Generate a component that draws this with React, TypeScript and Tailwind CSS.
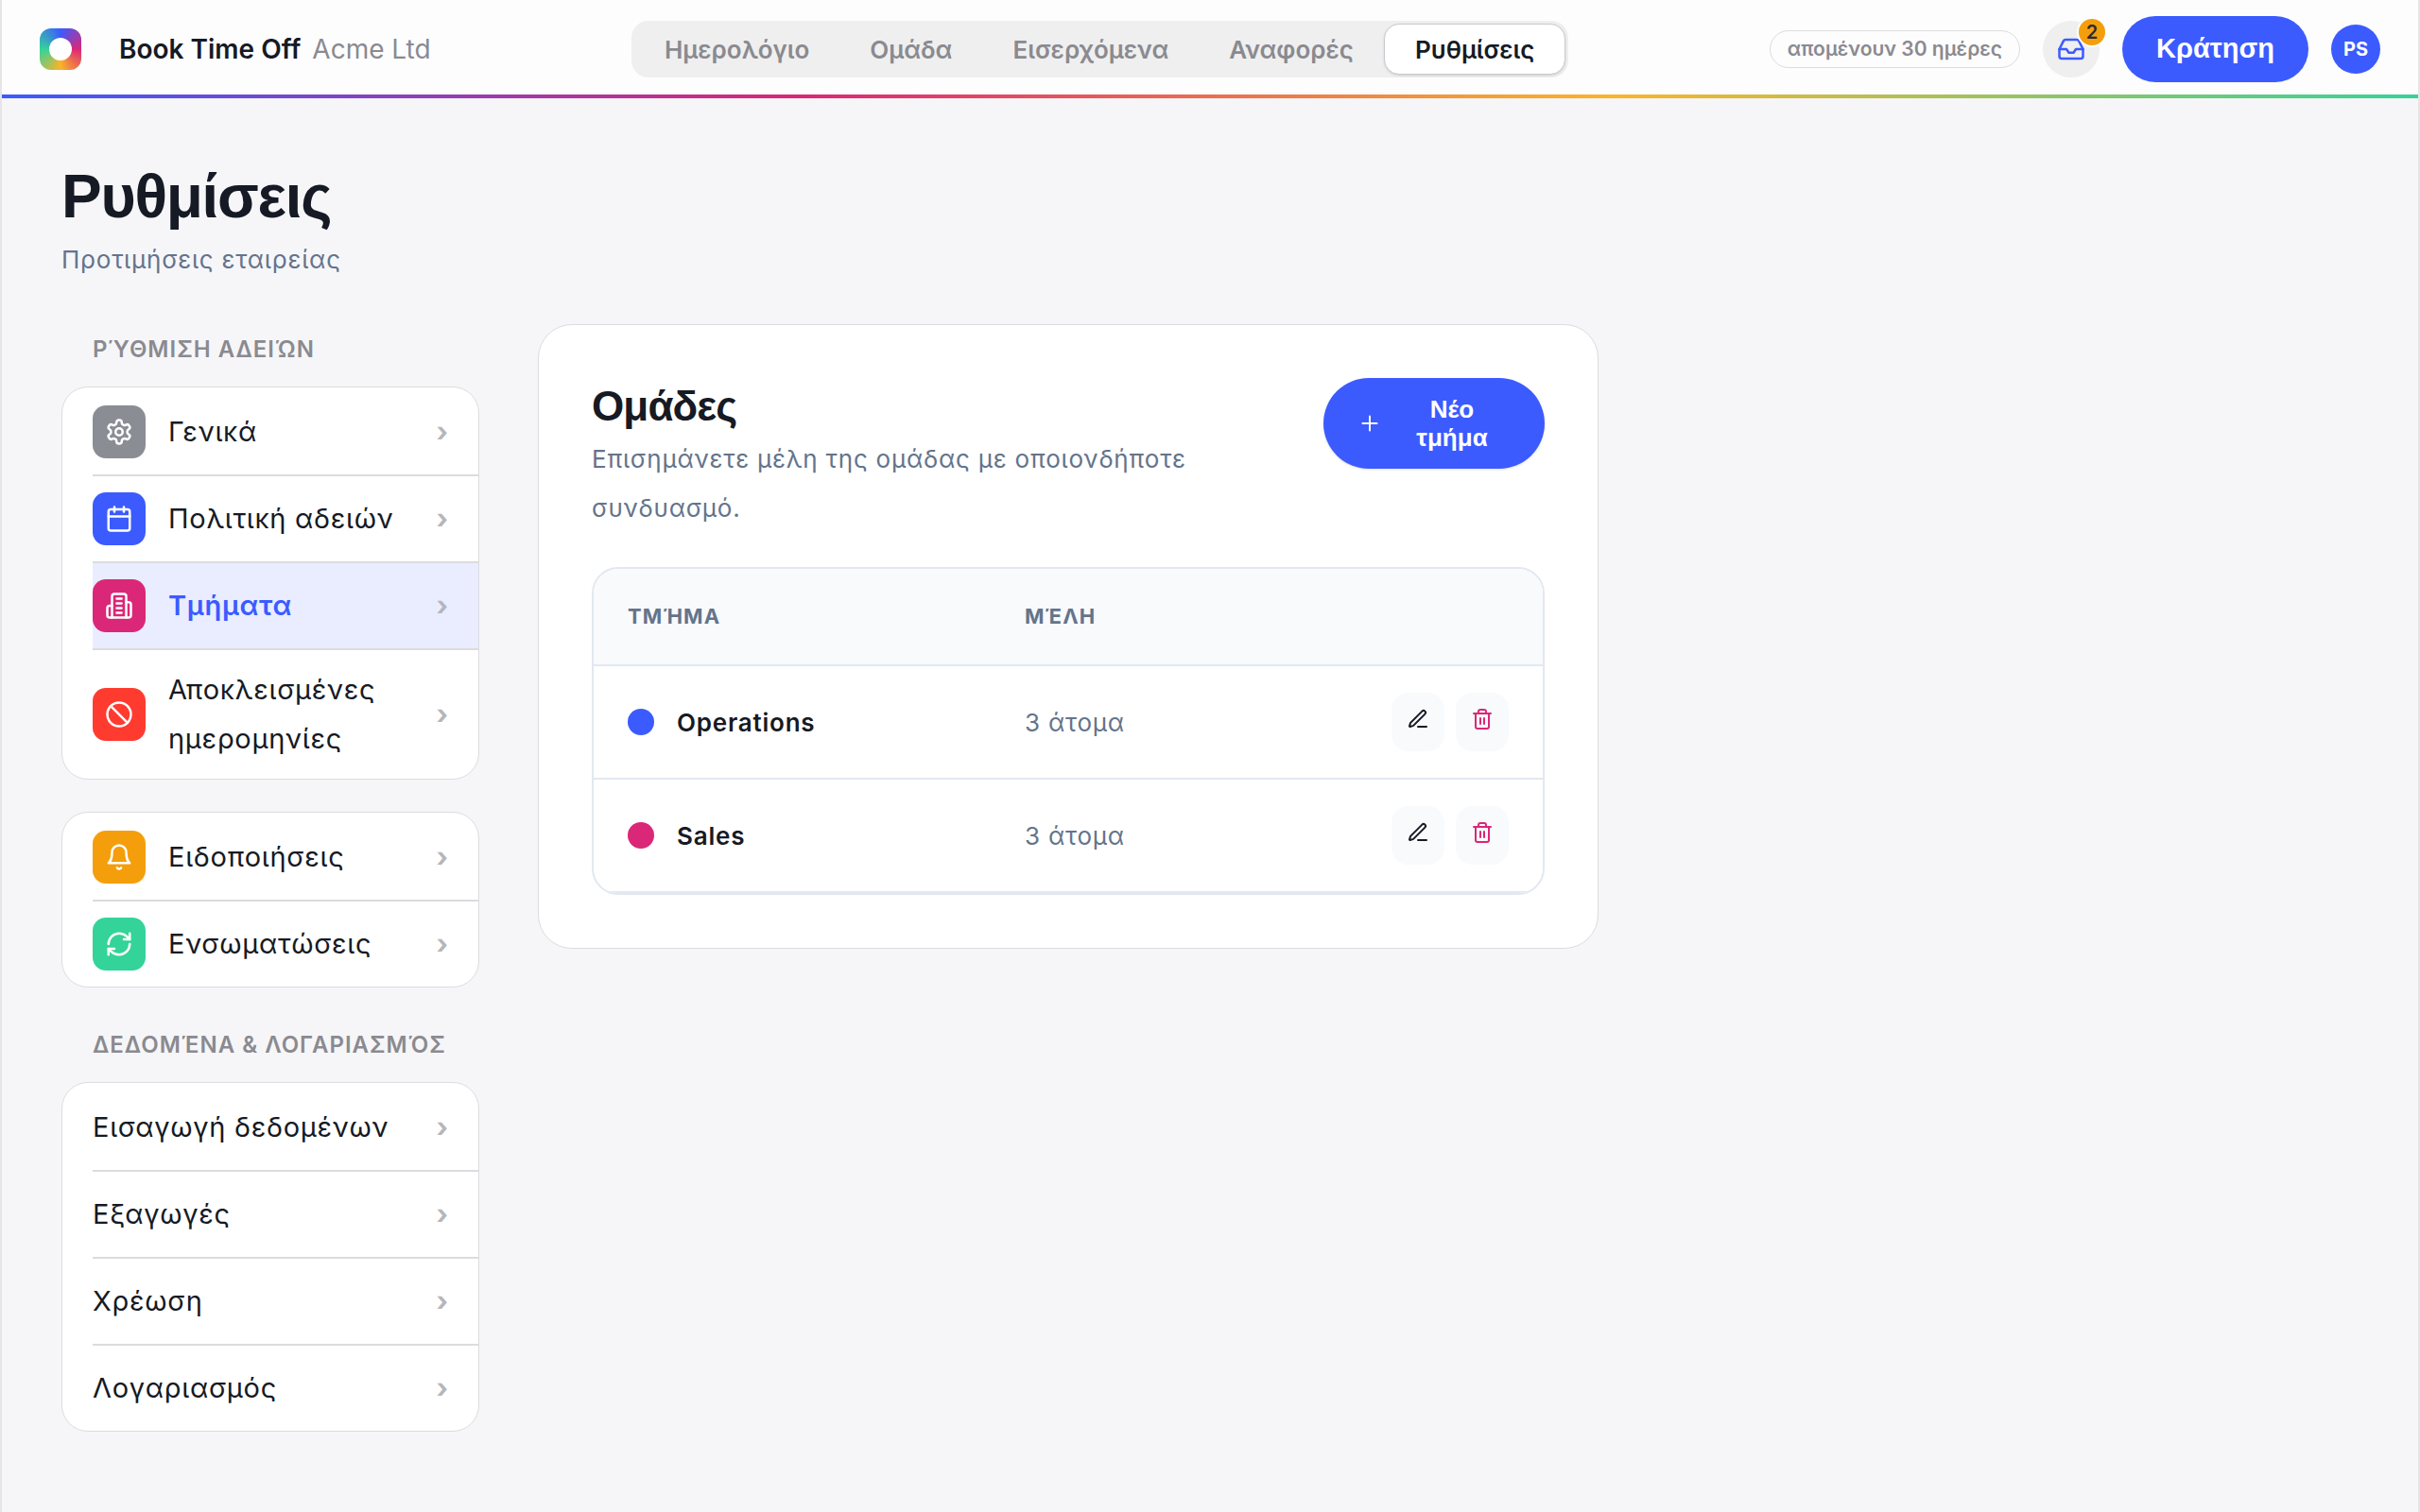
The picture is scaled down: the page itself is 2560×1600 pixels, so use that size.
import type { ReactNode } from 'react'
import { Ban, Inbox, Plus, RefreshCw } from 'lucide-react'

const navItems = ['Ημερολόγιο', 'Ομάδα', 'Εισερχόμενα', 'Αναφορές', 'Ρυθμίσεις']

const teams = [
  { name: 'Operations', members: '3 άτομα', dot: 'bg-[#3b5bff]' },
  { name: 'Sales', members: '3 άτομα', dot: 'bg-[#db2777]' },
]

function Icon({ children, size = 30 }: { children: ReactNode; size?: number }) {
  return (
    <svg
      width={size}
      height={size}
      viewBox="0 0 24 24"
      fill="none"
      stroke="currentColor"
      strokeWidth="2"
      strokeLinecap="round"
      strokeLinejoin="round"
      aria-hidden="true"
    >
      {children}
    </svg>
  )
}

function GearIcon() {
  return (
    <Icon>
      <path d="M12.22 2h-.44a2 2 0 0 0-2 2v.18a2 2 0 0 1-1 1.73l-.43.25a2 2 0 0 1-2 0l-.15-.08a2 2 0 0 0-2.73.73l-.22.38a2 2 0 0 0 .73 2.73l.15.1a2 2 0 0 1 1 1.72v.51a2 2 0 0 1-1 1.74l-.15.09a2 2 0 0 0-.73 2.73l.22.38a2 2 0 0 0 2.73.73l.15-.08a2 2 0 0 1 2 0l.43.25a2 2 0 0 1 1 1.73V20a2 2 0 0 0 2 2h.44a2 2 0 0 0 2-2v-.18a2 2 0 0 1 1-1.73l.43-.25a2 2 0 0 1 2 0l.15.08a2 2 0 0 0 2.73-.73l.22-.39a2 2 0 0 0-.73-2.73l-.15-.08a2 2 0 0 1-1-1.74v-.5a2 2 0 0 1 1-1.74l.15-.09a2 2 0 0 0 .73-2.73l-.22-.38a2 2 0 0 0-2.73-.73l-.15.08a2 2 0 0 1-2 0l-.43-.25a2 2 0 0 1-1-1.73V4a2 2 0 0 0-2-2z" />
      <circle cx="12" cy="12" r="3" />
    </Icon>
  )
}

function CalendarIcon() {
  return (
    <Icon>
      <path d="M8 2v4" />
      <path d="M16 2v4" />
      <rect width="18" height="18" x="3" y="4" rx="2" />
      <path d="M3 10h18" />
    </Icon>
  )
}

function BuildingIcon() {
  return (
    <Icon>
      <path d="M6 22V4a2 2 0 0 1 2-2h8a2 2 0 0 1 2 2v18Z" />
      <path d="M6 12H4a2 2 0 0 0-2 2v6a2 2 0 0 0 2 2h2" />
      <path d="M18 9h2a2 2 0 0 1 2 2v9a2 2 0 0 1-2 2h-2" />
      <path d="M10 6h4" />
      <path d="M10 10h4" />
      <path d="M10 14h4" />
      <path d="M10 18h4" />
    </Icon>
  )
}

function BellIcon() {
  return (
    <Icon>
      <path d="M6 8a6 6 0 0 1 12 0c0 7 3 9 3 9H3s3-2 3-9" />
      <path d="M10.3 21a1.94 1.94 0 0 0 3.4 0" />
    </Icon>
  )
}

function PenIcon() {
  return (
    <Icon size={24}>
      <path d="M12 20h9" />
      <path d="M16.376 3.622a1 1 0 0 1 3.002 3.002L7.368 18.635a2 2 0 0 1-.855.506l-2.872.838a.5.5 0 0 1-.62-.62l.838-2.872a2 2 0 0 1 .506-.854z" />
    </Icon>
  )
}

function TrashIcon() {
  return (
    <Icon size={24}>
      <path d="M3 6h18" />
      <path d="M19 6v14a2 2 0 0 1-2 2H7a2 2 0 0 1-2-2V6" />
      <path d="M8 6V4a2 2 0 0 1 2-2h4a2 2 0 0 1 2 2v2" />
      <path d="M10 11v6" />
      <path d="M14 11v6" />
    </Icon>
  )
}

function Header() {
  return (
    <header>
      <div className="flex h-[100px] items-center justify-between bg-[#fdfdfe] px-10 pt-1">
        <a href="#" className="flex items-center">
          <span className="flex h-11 w-11 items-center justify-center rounded-xl bg-[conic-gradient(#3b5bff,#db2777,#fbb429,#34d399,#3b5bff)]">
            <span className="h-6 w-6 rounded-full bg-white" />
          </span>
          <span className="ml-10 text-[28px] font-semibold text-[#161a24]">Book Time Off</span>
          <span className="ml-3 text-[28px] text-[#8a8a90]">Acme Ltd</span>
        </a>

        <nav className="flex h-[60px] items-center rounded-[18px] bg-[#efefef] px-[3px]">
          {navItems.map((item) => (
            <a
              key={item}
              href="#"
              className={
                item === 'Ρυθμίσεις'
                  ? 'flex h-[54px] items-center rounded-2xl border border-[#c9cad0] bg-white px-8 text-[26px] font-semibold text-[#161a24] shadow-sm'
                  : 'flex h-[54px] items-center px-8 text-[26px] font-semibold text-[#8a8a90]'
              }
            >
              {item}
            </a>
          ))}
        </nav>

        <div className="flex items-center gap-6">
          <span className="flex h-10 items-center rounded-full border border-[#dcdcdf] px-[18px] text-[21px] font-semibold text-[#8a8a90]">
            απομένουν 30 ημέρες
          </span>
          <button
            type="button"
            aria-label="Εισερχόμενα"
            className="relative flex h-[60px] w-[60px] items-center justify-center rounded-full bg-[#efefef] text-[#3b5bff]"
          >
            <Inbox size={30} />
            <span className="absolute -right-2 -top-1 flex h-8 w-8 items-center justify-center rounded-full border-2 border-[#fdfdfe] bg-[#f59e0b] text-[20px] font-semibold text-[#2b2b33]">
              2
            </span>
          </button>
          <button
            type="button"
            className="h-[70px] rounded-full bg-[#3b5bff] px-9 font-['Liberation_Sans',sans-serif] text-[29px] font-bold text-white"
          >
            Κράτηση
          </button>
          <button type="button" className="h-[52px] w-[52px] rounded-full bg-[#3b5bff] text-[20px] font-bold text-white">
            PS
          </button>
        </div>
      </div>
      <div className="h-1 bg-[linear-gradient(90deg,#3b5bff,#db2777,#fbb429,#34d399)]" />
    </header>
  )
}

type Entry = { label: string; icon?: ReactNode; tint?: string; active?: boolean }

const leaveEntries: Entry[] = [
  { label: 'Γενικά', icon: <GearIcon />, tint: 'bg-[#8a8d94]' },
  { label: 'Πολιτική αδειών', icon: <CalendarIcon />, tint: 'bg-[#3b5bff]' },
  { label: 'Τμήματα', icon: <BuildingIcon />, tint: 'bg-[#db2777]', active: true },
  { label: 'Αποκλεισμένες ημερομηνίες', icon: <Ban size={30} />, tint: 'bg-[#ff3b30]' },
]

const appEntries: Entry[] = [
  { label: 'Ειδοποιήσεις', icon: <BellIcon />, tint: 'bg-[#f59e0b]' },
  { label: 'Ενσωματώσεις', icon: <RefreshCw size={30} />, tint: 'bg-[#34d399]' },
]

const dataEntries: Entry[] = [
  { label: 'Εισαγωγή δεδομένων' },
  { label: 'Εξαγωγές' },
  { label: 'Χρέωση' },
  { label: 'Λογαριασμός' },
]

function MenuCard({ entries }: { entries: Entry[] }) {
  return (
    <ul className="overflow-hidden rounded-[28px] border border-[#dcdcdf] bg-white pl-8">
      {entries.map(({ label, icon, tint, active }) => (
        <li key={label} className="border-t-2 border-[#dcdcdf] first:border-transparent">
          <a
            href="#"
            className={`flex min-h-[90px] items-center gap-6 py-4 pr-8 text-[29px] leading-[52px] ${
              active ? 'bg-[#e9edff] font-semibold text-[#3b5bff]' : 'text-[#161a24]'
            }`}
          >
            {icon && (
              <span className={`flex h-14 w-14 shrink-0 items-center justify-center rounded-[14px] text-white ${tint}`}>
                {icon}
              </span>
            )}
            <span className="flex-1 tracking-wide">{label}</span>
            <span className="font-bold text-[#b5b6ba]">›</span>
          </a>
        </li>
      ))}
    </ul>
  )
}

function SectionLabel({ children }: { children: ReactNode }) {
  return (
    <h2 className="whitespace-nowrap pl-[33px] text-[24px] font-semibold leading-8 tracking-[1px] text-[#8a8a90]">
      {children}
    </h2>
  )
}

function Sidebar() {
  return (
    <aside className="w-[442px] shrink-0">
      <div className="mb-[23px] mt-[11px]">
        <SectionLabel>ΡΎΘΜΙΣΗ ΑΔΕΙΏΝ</SectionLabel>
      </div>
      <MenuCard entries={leaveEntries} />
      <div className="mt-[34px]">
        <MenuCard entries={appEntries} />
      </div>
      <div className="mb-[23px] mt-[45px]">
        <SectionLabel>ΔΕΔΟΜΈΝΑ &amp; ΛΟΓΑΡΙΑΣΜΌΣ</SectionLabel>
      </div>
      <MenuCard entries={dataEntries} />
    </aside>
  )
}

function TeamsTable() {
  return (
    <div className="overflow-hidden rounded-[28px] border-2 border-[#e2e8f0]">
      <table className="w-full table-fixed text-left text-[26px]">
        <thead className="bg-[#f8fafc] text-[22px] text-[#64748b]">
          <tr className="h-[102px] border-b-2 border-[#e2e8f0]">
            <th className="w-[420px] pl-9 font-bold tracking-wider">ΤΜΉΜΑ</th>
            <th className="pl-9 font-bold tracking-wider">ΜΈΛΗ</th>
            <th className="w-[240px]" />
          </tr>
        </thead>
        <tbody>
          {teams.map((team) => (
            <tr key={team.name} className="h-[120px] border-b-2 border-[#e2e8f0]">
              <td className="pl-9">
                <span className="flex items-center gap-6">
                  <span className={`h-7 w-7 rounded-full ${team.dot}`} />
                  <span className="font-semibold tracking-[0.03em] text-[#161a24]">{team.name}</span>
                </span>
              </td>
              <td className="pl-9 tracking-[0.03em] text-[#64748b]">{team.members}</td>
              <td className="pr-9">
                <span className="flex justify-end gap-3">
                  <button
                    type="button"
                    aria-label="Επεξεργασία"
                    className="flex h-[62px] w-14 items-center justify-center rounded-[18px] bg-[#f8fafc] pb-1.5 text-[#161a24]"
                  >
                    <PenIcon />
                  </button>
                  <button
                    type="button"
                    aria-label="Διαγραφή"
                    className="flex h-[62px] w-14 items-center justify-center rounded-[18px] bg-[#f8fafc] pb-1.5 text-[#db2777]"
                  >
                    <TrashIcon />
                  </button>
                </span>
              </td>
            </tr>
          ))}
        </tbody>
      </table>
    </div>
  )
}

function TeamsPanel() {
  return (
    <section className="w-full max-w-[1122px] rounded-[36px] border border-[#dcdcdf] bg-white p-14">
      <div className="mb-9 flex items-start justify-between">
        <div className="max-w-[700px]">
          <h2 className="font-['Liberation_Sans',sans-serif] text-[44px] font-bold leading-[60px] tracking-[-0.02em] text-[#161a24]">
            Ομάδες
          </h2>
          <p className="text-[26px] leading-[52px] tracking-[0.03em] text-[#64748b]">
            Επισημάνετε μέλη της ομάδας με οποιονδήποτε συνδυασμό.
          </p>
        </div>
        <button
          type="button"
          className="flex h-24 w-[234px] items-center gap-3 rounded-full bg-[#3b5bff] px-9 font-['Liberation_Sans',sans-serif] text-[26px] font-bold leading-[30px] text-white shadow-sm"
        >
          <Plus size={26} strokeWidth={1.8} />
          <span className="flex-1 px-4">Νέο τμήμα</span>
        </button>
      </div>
      <TeamsTable />
    </section>
  )
}

export default function App() {
  return (
    <div className="min-h-screen border-x-2 border-[#e5e5e8] bg-[#f6f6f9] font-[Inter,'Liberation_Sans',sans-serif]">
      <Header />
      <main className="px-[63px] pb-20 pt-[68px]">
        <h1 className="font-['Liberation_Sans',sans-serif] text-[64px] font-bold leading-[72px] tracking-[-0.02em] text-[#161a24]">
          Ρυθμίσεις
        </h1>
        <p className="mt-[5px] text-[26px] leading-[52px] tracking-[0.03em] text-[#64748b]">Προτιμήσεις εταιρείας</p>
        <div className="mt-[42px] flex items-start gap-[62px]">
          <Sidebar />
          <TeamsPanel />
        </div>
      </main>
    </div>
  )
}
